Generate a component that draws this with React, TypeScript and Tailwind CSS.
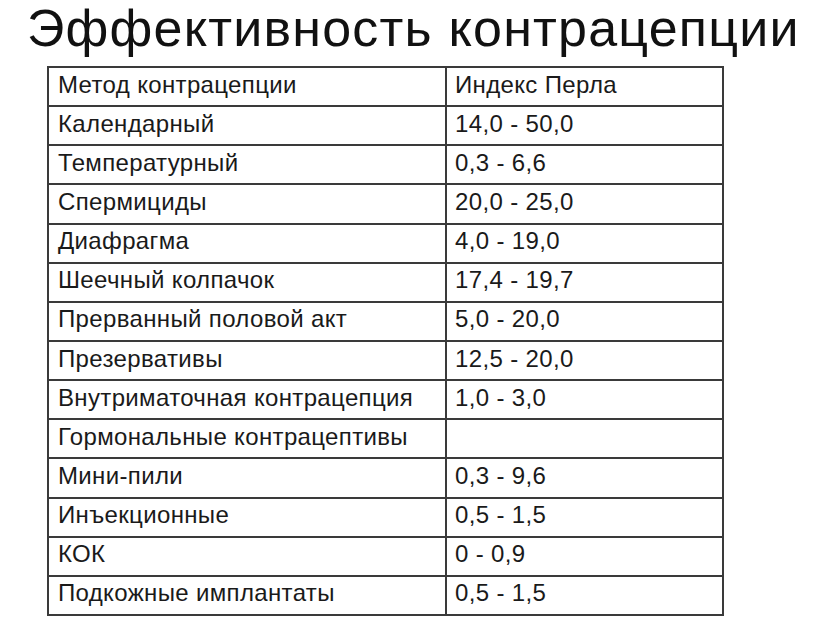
const rows: [string, string][] = [
  ['Метод контрацепции', 'Индекс Перла'],
  ['Календарный', '14,0 - 50,0'],
  ['Температурный', '0,3 - 6,6'],
  ['Спермициды', '20,0 - 25,0'],
  ['Диафрагма', '4,0 - 19,0'],
  ['Шеечный колпачок', '17,4 - 19,7'],
  ['Прерванный половой акт', '5,0 - 20,0'],
  ['Презервативы', '12,5 - 20,0'],
  ['Внутриматочная контрацепция', '1,0 - 3,0'],
  ['Гормональные контрацептивы', ''],
  ['Мини-пили', '0,3 - 9,6'],
  ['Инъекционные', '0,5 - 1,5'],
  ['КОК', '0 - 0,9'],
  ['Подкожные имплантаты', '0,5 - 1,5'],
];

export default function App() {
  return (
    <div className="w-[829px] h-[626px] bg-white text-[#111] font-['Liberation_Sans',Arial,sans-serif]">
      {/* Title */}
      <h1 className="pt-[2px] pl-[27px] text-[52px] leading-[52px] tracking-[1.2px] whitespace-nowrap">
        Эффективность контрацепции
      </h1>

      {/* Table */}
      <div className="mt-[12px] ml-[47px] w-[677px] h-[550px] flex flex-col border-2 border-[#3a3a3a]">
        {rows.map(([method, index], i) => (
          <div
            key={i}
            className={`flex-1 flex text-[24px] leading-none tracking-[0.35px] text-[#1a1a1a] ${i > 0 ? 'border-t-2 border-[#3a3a3a]' : ''}`}
          >
            <div className="w-[398px] border-r-2 border-[#3a3a3a] flex items-center pl-[9px] pb-[4px] whitespace-nowrap">
              {method}
            </div>
            <div className="flex-1 flex items-center pl-[8px] pb-[4px] whitespace-nowrap">{index}</div>
          </div>
        ))}
      </div>
    </div>
  );
}
